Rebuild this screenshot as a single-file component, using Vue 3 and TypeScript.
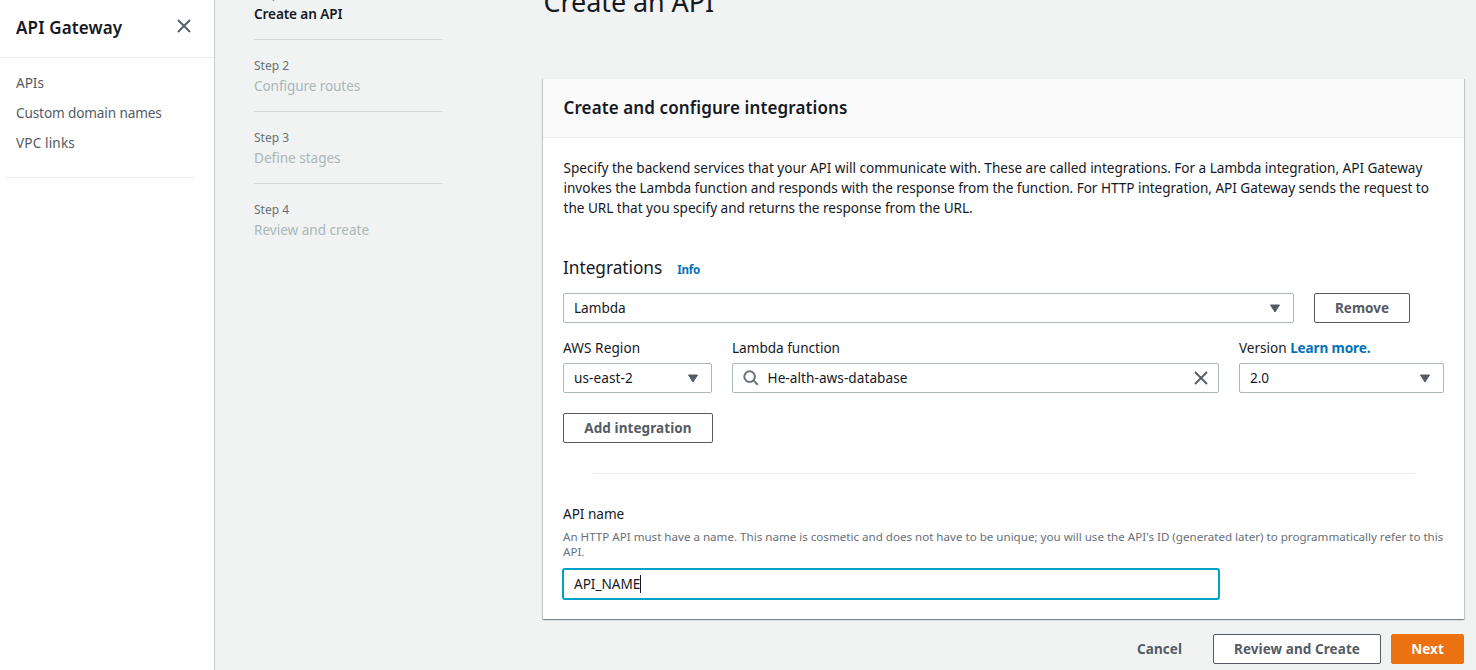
<script setup lang="ts">
import { ref } from 'vue'

interface Step {
  label: string
  title: string
  key: string
}

const navLinks = [
  { text: 'APIs', key: 'apis' },
  { text: 'Custom domain names', key: 'domains' },
  { text: 'VPC links', key: 'vpc' },
]

const steps: Step[] = [
  { label: 'Step 1', title: 'Create an API', key: 's1' },
  { label: 'Step 2', title: 'Configure routes', key: 's2' },
  { label: 'Step 3', title: 'Define stages', key: 's3' },
  { label: 'Step 4', title: 'Review and create', key: 's4' },
]
const activeStep = ref(0)
const apiName = ref('API_NAME')
</script>

<template>
  <div class="page">
    <aside class="sidebar">
      <header class="side-head">
        <span class="side-title">API Gateway</span>
        <svg class="close side-close" width="16" height="16" viewBox="0 0 16 16"><path d="M2 2l12 12M14 2L2 14" /></svg>
      </header>
      <nav class="side-nav">
        <a v-for="n in navLinks" :key="n.key" :class="['side-link', n.key]">{{ n.text }}</a>
      </nav>
      <div class="side-rule"></div>
    </aside>

    <ol class="steps">
      <li v-for="(s, i) in steps" :key="s.key" class="step">
        <span class="step-label">{{ s.label }}</span>
        <span :class="['step-title', s.key, { active: i === activeStep }]">{{ s.title }}</span>
      </li>
    </ol>

    <main class="content">
      <h1 class="title"><span>Create an API</span></h1>
      <section class="card">
        <header class="card-head"><h2>Create and configure integrations</h2></header>
        <div class="card-body">
          <p class="intro">
            <span class="i1">Specify the backend services that your API will communicate with. These are called integrations. For a Lambda integration, API Gateway</span><br />
            <span class="i2">invokes the Lambda function and responds with the response from the function. For HTTP integration, API Gateway sends the request to</span><br />
            <span class="i3">the URL that you specify and returns the response from the URL.</span>
          </p>
          <div class="sub-head"><h3>Integrations</h3><a class="info">Info</a></div>
          <div class="row">
            <div class="field lambda-select">
              <span class="t-lambda">Lambda</span>
              <svg class="caret" width="12" height="9" viewBox="0 0 12 9"><path d="M1.5 1h9L6 8z" /></svg>
            </div>
            <button class="btn remove"><span>Remove</span></button>
          </div>
          <div class="row grid">
            <div class="region">
              <label><span class="l-region">AWS Region</span></label>
              <div class="field">
                <span class="t-region">us-east-2</span>
                <svg class="caret" width="12" height="9" viewBox="0 0 12 9"><path d="M1.5 1h9L6 8z" /></svg>
              </div>
            </div>
            <div class="function">
              <label><span class="l-function">Lambda function</span></label>
              <div class="field search">
                <svg class="lens" width="16" height="16" viewBox="0 0 16 16"><circle cx="6.6" cy="6.6" r="5.3" /><path d="M10.6 10.6l4.2 4.2" /></svg>
                <span class="t-function">He-alth-aws-database</span>
                <svg class="close clear" width="16" height="16" viewBox="0 0 16 16"><path d="M2 2l12 12M14 2L2 14" /></svg>
              </div>
            </div>
            <div class="version">
              <label><span class="l-version">Version</span><a class="learn">Learn more.</a></label>
              <div class="field">
                <span class="t-version">2.0</span>
                <svg class="caret" width="12" height="9" viewBox="0 0 12 9"><path d="M1.5 1h9L6 8z" /></svg>
              </div>
            </div>
          </div>
          <button class="btn add"><span>Add integration</span></button>
          <div class="rule"></div>
          <label class="name-label"><span>API name</span></label>
          <p class="hint">
            <span class="h1">An HTTP API must have a name. This name is cosmetic and does not have to be unique; you will use the API's ID (generated later) to programmatically refer to this</span><br />
            <span class="h2">API.</span>
          </p>
          <div class="field name-input"><span class="t-name">{{ apiName }}</span><i class="cursor"></i></div>
        </div>
      </section>
      <footer class="actions">
        <button class="btn link"><span>Cancel</span></button>
        <button class="btn review"><span>Review and Create</span></button>
        <button class="btn primary"><span>Next</span></button>
      </footer>
    </main>
  </div>
</template>

<style>
body {
  background: #f1f3f3;
  overflow: hidden;
}
</style>

<style scoped>
* {
  box-sizing: border-box;
}
.page {
  display: flex;
  width: 1476px;
  height: 670px;
  overflow: hidden;
  background: #f1f3f3;
  color: #16191f;
  font: 13.6px/20px 'Noto Sans', 'Open Sans', sans-serif;
  letter-spacing: -0.027px;
  white-space: nowrap;
}
h1, h2, h3, p, ol {
  margin: 0;
  padding: 0;
  font-weight: 400;
}
.sidebar {
  flex: none;
  width: 215px;
  background: #fff;
  border-right: 1px solid #c5cccc;
}
.side-head {
  display: flex;
  align-items: center;
  justify-content: space-between;
  height: 58px;
  padding: 0 22px 1px 16px;
  border-bottom: 1px solid #eaeded;
}
.side-title {
  font-size: 17px;
  font-weight: 600;
  letter-spacing: 0.14px;
}
.close {
  fill: none;
  stroke: #545b64;
  stroke-width: 1.8;
}
.side-close {
  margin-bottom: 4px;
}
.side-nav {
  display: flex;
  flex-direction: column;
  gap: 10px;
  padding: 15px 16px 0;
  color: #545b64;
}
.side-link {
  align-self: flex-start;
}
.domains {
  letter-spacing: -0.13px;
}
.vpc {
  letter-spacing: 0.14px;
}
.side-rule {
  height: 1px;
  margin: 24px 20px 0 6px;
  background: #eaeded;
}
.steps {
  flex: none;
  width: 189px;
  margin: -32px 0 0 39px;
  list-style: none;
}
.step {
  display: flex;
  flex-direction: column;
  align-items: flex-start;
  gap: 2px;
  height: 72px;
  padding-top: 18px;
  border-bottom: 1px solid #d5dbdb;
}
.step:last-child {
  border-bottom: 0;
}
.step-label {
  font-size: 12px;
  line-height: 16px;
  letter-spacing: 0;
  color: #687078;
}
.step-title {
  color: #aab7b8;
}
.s2 {
  letter-spacing: -0.1px;
}
.step-title.active {
  color: #16191f;
  font-weight: 600;
  letter-spacing: -0.12px;
}
.content {
  flex: none;
  width: 921px;
  margin-left: 100px;
}
.title {
  height: 78px;
  margin-top: -16px;
  padding-left: 0.5px;
  font-size: 27px;
  line-height: 36px;
  letter-spacing: -0.08px;
}
.card {
  height: 541px;
  margin-top: 16px;
  background: #fff;
  border-top: 1px solid #eaeded;
  box-shadow: 0 1px 1px 0 rgba(0, 28, 36, 0.3), 1px 1px 1px 0 rgba(0, 28, 36, 0.15), -1px 1px 1px 0 rgba(0, 28, 36, 0.15);
}
.card-head {
  display: flex;
  align-items: center;
  height: 59px;
  padding: 0 20px 0 20.5px;
  background: #fafafa;
  border-bottom: 1px solid #eaeded;
}
h2 {
  font-size: 17px;
  font-weight: 600;
  letter-spacing: 0.11px;
}
.card-body {
  padding: 20px;
}
.intro {
  padding-left: 0.5px;
}
.i2 {
  letter-spacing: -0.04px;
}
.sub-head {
  display: flex;
  align-items: baseline;
  gap: 15px;
  height: 25px;
  margin-top: 40px;
}
h3 {
  font-size: 17.3px;
  letter-spacing: -0.05px;
}
.info {
  font-size: 11.6px;
  font-weight: 700;
  letter-spacing: -0.2px;
  color: #0073bb;
}
.row {
  display: flex;
  gap: 20px;
  margin-top: 10px;
}
.grid {
  margin-top: 15px;
}
.field {
  display: flex;
  align-items: center;
  justify-content: space-between;
  height: 30px;
  padding: 0 12px 0 10px;
  background: #fff;
  border: 1px solid #aab7b8;
  border-radius: 2px;
}
.lambda-select {
  width: 731px;
}
.caret {
  fill: #545b64;
  stroke: #545b64;
  stroke-width: 1;
  stroke-linejoin: round;
}
.region {
  width: 149px;
}
.function {
  width: 487px;
}
.version {
  width: 205px;
}
.grid label {
  display: flex;
  gap: 4px;
  height: 20px;
  margin-bottom: 5px;
}
.search {
  justify-content: flex-start;
  padding: 0 9px 0 9.5px;
}
.lens {
  fill: none;
  stroke: #687078;
  stroke-width: 2;
}
.l-region,
.t-region {
  letter-spacing: 0.08px;
}
.t-function {
  margin-left: 9px;
  letter-spacing: 0.06px;
}
.clear {
  margin-left: auto;
}
.learn {
  margin-left: -0.5px;
  font-weight: 700;
  letter-spacing: -0.14px;
  color: #0073bb;
}
.btn {
  display: flex;
  align-items: center;
  justify-content: center;
  height: 30px;
  padding: 0;
  font: 700 13.5px/20px 'Noto Sans', 'Open Sans', sans-serif;
  letter-spacing: 0.08px;
  color: #545b64;
  background: #fff;
  border: 1px solid #545b64;
  border-radius: 2px;
}
.remove {
  width: 96px;
  letter-spacing: 0;
}
.add {
  width: 150px;
  margin-top: 20px;
}
.rule {
  height: 1px;
  margin: 30px 29px 0 30px;
  background: #eaeded;
}
.name-label {
  display: block;
  margin-top: 30px;
}
.hint {
  margin-top: 5px;
  font-size: 11.6px;
  line-height: 15px;
  letter-spacing: -0.006px;
  color: #687078;
}
.name-input {
  width: 658px;
  height: 32px;
  justify-content: flex-start;
  margin: 9px 0 0 -1px;
  border: 2px solid #00a1c9;
  border-radius: 3px;
}
.cursor {
  width: 1px;
  height: 18px;
  margin-left: -0.5px;
  background: #16191f;
}
.actions {
  display: flex;
  justify-content: flex-end;
  gap: 10px;
  margin-top: 15px;
}
.link {
  width: 87px;
  background: transparent;
  border-color: transparent;
}
.review {
  width: 168px;
}
.primary {
  width: 73px;
  color: #fff;
  background: #ec7211;
  border-color: #ec7211;
}
</style>
